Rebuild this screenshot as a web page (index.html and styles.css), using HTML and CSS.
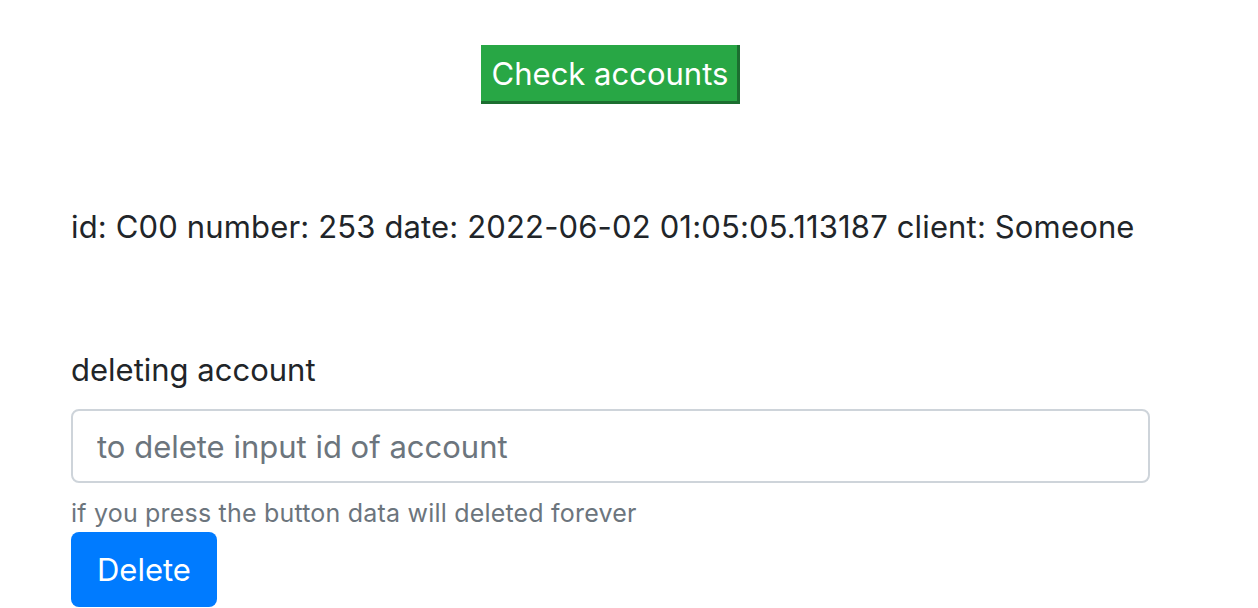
FILE: index.html
```html
<!DOCTYPE html>
<html lang="en">
<head>
<meta charset="utf-8">
<title>Accounts</title>
<link rel="stylesheet" href="styles.css">
</head>
<body>
<main class="page">
  <div class="check-row">
    <button class="btn-check" type="button">Check accounts</button>
  </div>
  <p class="account-line">id: C00 number: 253 date: 2022-06-02 01:05:05.113187 client: Someone</p>
  <form class="delete-form">
    <label class="form-label" for="acc-id">deleting account</label>
    <input class="form-control" id="acc-id" type="text" placeholder="to delete input id of account">
    <small class="form-text">if you press the button data will deleted forever</small>
    <button class="btn-delete" type="button">Delete</button>
  </form>
</main>
</body>
</html>
```
FILE: styles.css
```css
* { box-sizing: border-box; }
html, body { margin: 0; padding: 0; background: #fff; }
body {
  font-family: Inter, "Liberation Sans", sans-serif;
  font-size: 31px;
  line-height: 1.5;
  color: #212529;
}
.page {
  width: 1079px;
  margin-left: 71px;
  padding-top: 45px;
}
.check-row {
  display: flex;
  justify-content: center;
}
.btn-check {
  font-family: inherit;
  font-size: 31px;
  line-height: 1;
  height: 59px;
  padding: 0 9px 0 11px;
  background: #28a745;
  color: #fff;
  border: 0;
  border-right: 3px solid #1c6e30;
  border-bottom: 3px solid #1c6e30;
  border-radius: 0;
}
.account-line {
  margin: 100px 0 0;
  letter-spacing: 0.15px;
}
.delete-form {
  display: flex;
  flex-direction: column;
  align-items: flex-start;
  margin-top: 96px;
}
.form-label {
  margin-bottom: 16px;
}
.form-control {
  width: 100%;
  height: 74px;
  padding: 0 24px;
  font-family: inherit;
  font-size: 31px;
  color: #495057;
  border: 2px solid #ced4da;
  border-radius: 8px;
  background: #fff;
}
.form-control::placeholder { color: #6c757d; }
.form-text {
  margin-top: 12px;
  font-size: 25px;
  line-height: 37px;
  letter-spacing: 0.2px;
  color: #6c757d;
}
.btn-delete {
  font-family: inherit;
  font-size: 31px;
  line-height: 1;
  height: 75px;
  padding: 0 26px;
  background: #007bff;
  color: #fff;
  border: 0;
  border-radius: 8px;
}
```
